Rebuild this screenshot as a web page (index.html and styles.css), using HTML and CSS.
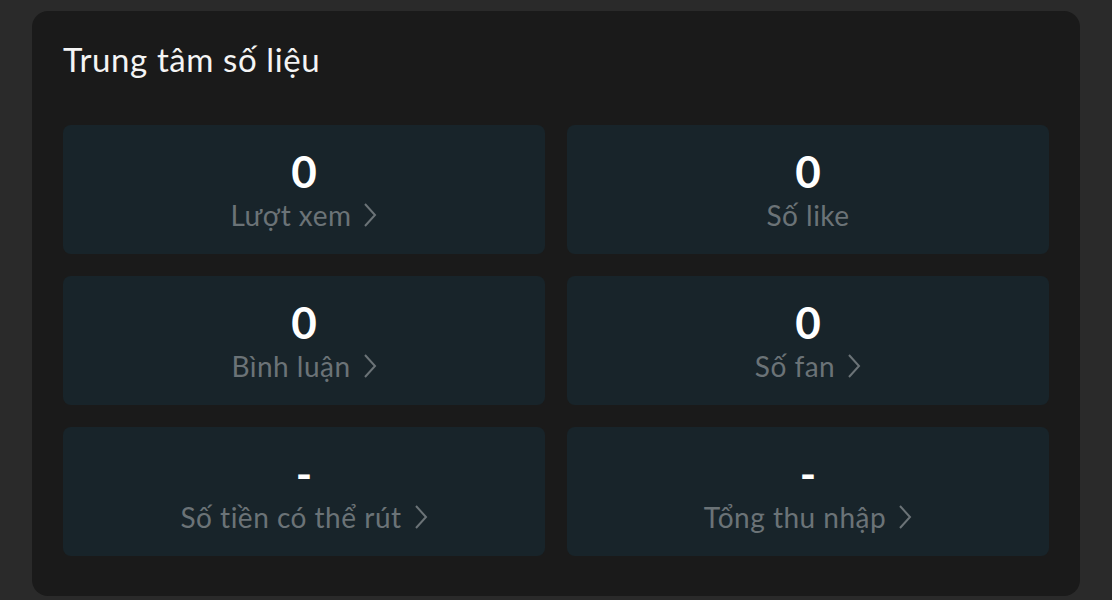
FILE: index.html
```html
<!DOCTYPE html>
<html lang="vi">
<head>
    <meta charset="UTF-8">
    <meta name="viewport" content="width=device-width, initial-scale=1.0">
    <title>Trung tâm số liệu</title>
    <link rel="stylesheet" href="styles.css">
</head>
<body>
    <div class="panel">
        <h2 class="panel-title">Trung tâm số liệu</h2>

        <div class="stats">
            <div class="stat">
                <div class="stat-value">0</div>
                <div class="stat-label">Lượt xem <svg class="chevron" viewBox="0 0 14 26"><path d="M2 2 L12 13 L2 24"/></svg></div>
            </div>
            <div class="stat">
                <div class="stat-value">0</div>
                <div class="stat-label">Số like</div>
            </div>
            <div class="stat">
                <div class="stat-value">0</div>
                <div class="stat-label">Bình luận <svg class="chevron" viewBox="0 0 14 26"><path d="M2 2 L12 13 L2 24"/></svg></div>
            </div>
            <div class="stat">
                <div class="stat-value">0</div>
                <div class="stat-label">Số fan <svg class="chevron" viewBox="0 0 14 26"><path d="M2 2 L12 13 L2 24"/></svg></div>
            </div>
            <div class="stat">
                <div class="stat-value">-</div>
                <div class="stat-label">Số tiền có thể rút <svg class="chevron" viewBox="0 0 14 26"><path d="M2 2 L12 13 L2 24"/></svg></div>
            </div>
            <div class="stat">
                <div class="stat-value">-</div>
                <div class="stat-label">Tổng thu nhập <svg class="chevron" viewBox="0 0 14 26"><path d="M2 2 L12 13 L2 24"/></svg></div>
            </div>
        </div>
    </div>
</body>
</html>
```

FILE: styles.css
```css
body {
    margin: 0;
    padding: 11px 32px 5px 32px;
    background: #2a2a2a;
    font-family: Lato, "Noto Sans", sans-serif;
    color: #f2f2f2;
}

.panel {
    background: #1a1a1a;
    border-radius: 16px;
    padding: 24px 31px 40px 31px;
}

.panel-title {
    margin: 0 0 42px 0;
    font-size: 33px;
    font-weight: 400;
    line-height: 48px;
    letter-spacing: 0.6px;
    color: #f4f4f4;
}

.stats {
    display: grid;
    grid-template-columns: 1fr 1fr;
    column-gap: 22px;
    row-gap: 22px;
}

.stat {
    height: 129px;
    background: #18242a;
    border-radius: 8px;
    display: flex;
    flex-direction: column;
    align-items: center;
    justify-content: center;
    gap: 2px;
}

.stat-value {
    font-size: 44px;
    font-weight: 700;
    line-height: 48px;
    color: #ffffff;
}

.stat-label {
    display: flex;
    align-items: center;
    gap: 12px;
    font-size: 28px;
    line-height: 36px;
    letter-spacing: 0.5px;
    color: #6b7377;
}

.chevron {
    width: 14px;
    height: 26px;
    fill: none;
    stroke: #6b7377;
    stroke-width: 2;
}
```
